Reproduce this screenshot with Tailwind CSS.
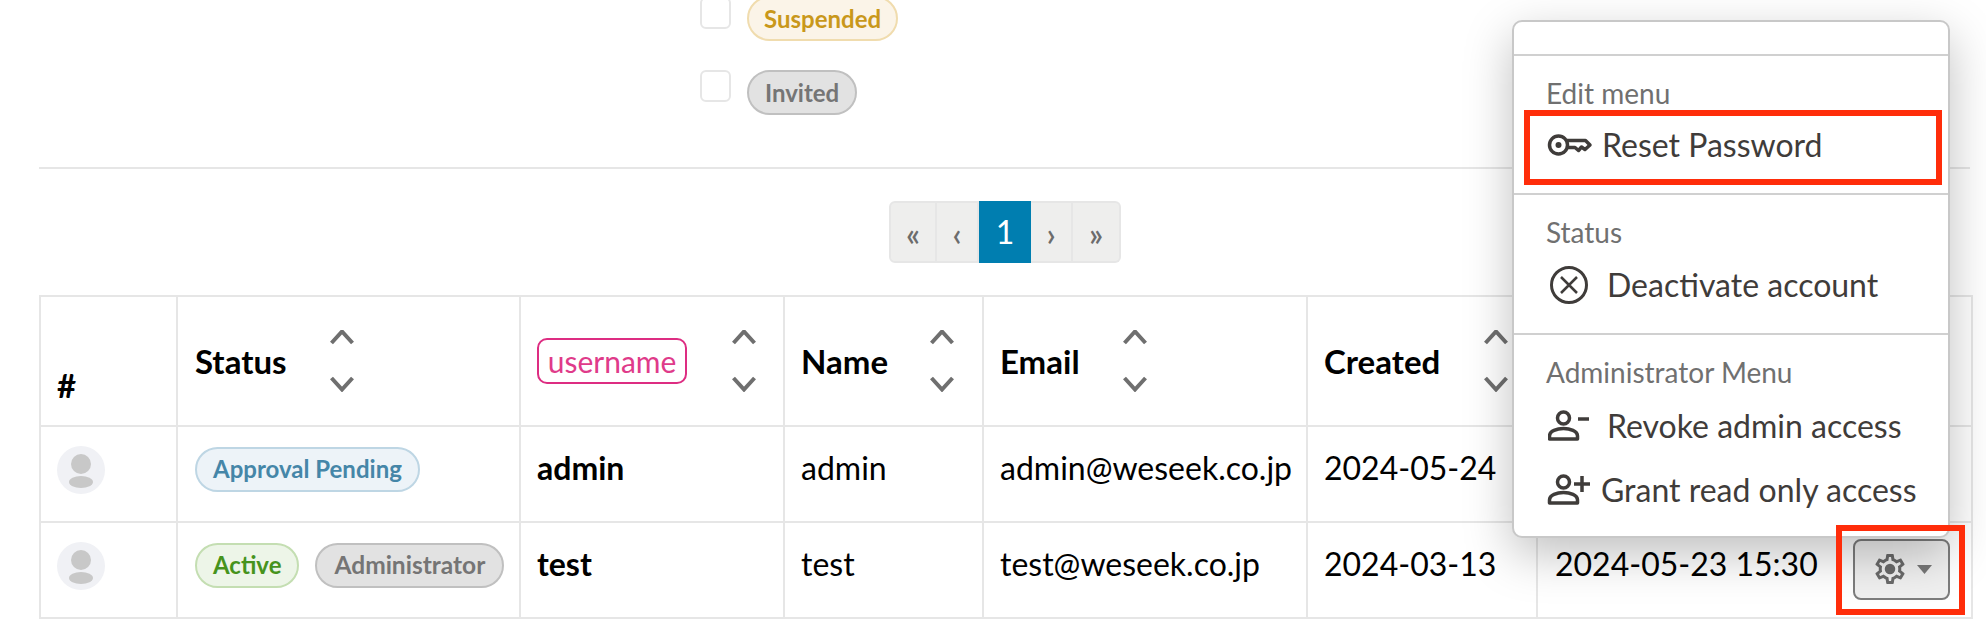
<!DOCTYPE html>
<html>
<head>
<meta charset="utf-8">
<script src="https://cdn.jsdelivr.net/npm/@tailwindcss/browser@4"></script>
</head>
<body class="bg-white overflow-hidden font-['Lato','Noto_Sans',sans-serif] text-[32px] text-black">
<div class="relative w-[1986px] h-[639px] overflow-hidden">
  <!-- filter rows -->
  <div class="pl-[700px] -mt-[4px] flex flex-col gap-[29px] h-[119px]">
    <div class="flex items-start gap-[16px]">
      <span class="block w-[31px] h-[32px] mt-[1px] rounded-[6px] border-2 border-[#e6e6e6] bg-white"></span>
      <span class="flex items-center h-[45px] px-[15px] rounded-full border-2 border-[#f0dcae] bg-[#fbf4e8] text-[#c9981b] text-[24px] font-bold">Suspended</span>
    </div>
    <div class="flex items-start gap-[16px]">
      <span class="block w-[31px] h-[32px] rounded-[6px] border-2 border-[#e6e6e6] bg-white"></span>
      <span class="flex items-center h-[45px] px-[16px] rounded-full border-2 border-[#c0c0c0] bg-[#e2e2e2] text-[#757575] text-[24px] font-bold">Invited</span>
    </div>
  </div>
  <!-- divider -->
  <div class="ml-[39px] w-[1931px] mt-[52px] h-[2px] bg-[#e6e6e6]"></div>
  <!-- pagination -->
  <div class="mt-[32px] ml-[889px] flex w-[232px] h-[62px] text-[#6c6c6c] text-[32px] leading-none font-semibold">
    <span class="w-[48px] pt-[3px] flex items-center justify-center bg-[#eeeeed] border-2 border-[#e6e6e6] rounded-l-[6px]">«</span>
    <span class="w-[42px] pt-[3px] flex items-center justify-center bg-[#eeeeed] border-y-2 border-r-2 border-[#e6e6e6]">‹</span>
    <span class="w-[52px] flex items-center justify-center bg-[#007eb0] text-white text-[32px] font-normal">1</span>
    <span class="w-[42px] pt-[3px] flex items-center justify-center bg-[#eeeeed] border-y-2 border-r-2 border-[#e6e6e6]">›</span>
    <span class="w-[48px] pt-[3px] flex items-center justify-center bg-[#eeeeed] border-y-2 border-r-2 border-[#e6e6e6] rounded-r-[6px]">»</span>
  </div>
  <!-- table -->
  <table class="mt-[32px] ml-[39px] w-[1932px] table-fixed border-collapse leading-[40px]">
    <colgroup>
      <col class="w-[137px]"><col class="w-[343px]"><col class="w-[264px]"><col class="w-[199px]"><col class="w-[324px]"><col class="w-[230px]"><col class="w-[435px]">
    </colgroup>
    <thead>
      <tr class="h-[130px] font-bold text-[33px]">
        <th class="border-2 border-[#e6e6e6] pl-[16px] pb-[20px] align-bottom text-left">#</th>
        <th class="border-2 border-[#e6e6e6] px-[17px] text-left"><div class="flex items-center"><span class="w-[135px]">Status</span>
          <svg width="24" height="62" viewBox="0 0 24 62" fill="none" stroke="#6f6f6f" stroke-width="4"><path d="M1.5 13 12 1.500 22.500 13M1.500 48 12 59.500 22.500 48"/></svg></div></th>
        <th class="border-2 border-[#e6e6e6] px-[16px] text-left font-normal"><div class="flex items-center"><span class="w-[195px]"><span class="inline-flex items-center h-[46px] w-[150px] justify-center rounded-[10px] border-2 border-[#dd2d82] text-[#df3b8a] text-[30px]">username</span></span>
          <svg width="24" height="62" viewBox="0 0 24 62" fill="none" stroke="#6f6f6f" stroke-width="4"><path d="M1.5 13 12 1.500 22.500 13M1.500 48 12 59.500 22.500 48"/></svg></div></th>
        <th class="border-2 border-[#e6e6e6] px-[16px] text-left"><div class="flex items-center"><span class="w-[129px]">Name</span>
          <svg width="24" height="62" viewBox="0 0 24 62" fill="none" stroke="#6f6f6f" stroke-width="4"><path d="M1.5 13 12 1.500 22.500 13M1.500 48 12 59.500 22.500 48"/></svg></div></th>
        <th class="border-2 border-[#e6e6e6] px-[16px] text-left"><div class="flex items-center"><span class="w-[123px]">Email</span>
          <svg width="24" height="62" viewBox="0 0 24 62" fill="none" stroke="#6f6f6f" stroke-width="4"><path d="M1.5 13 12 1.500 22.500 13M1.500 48 12 59.500 22.500 48"/></svg></div></th>
        <th class="border-2 border-[#e6e6e6] px-[16px] text-left"><div class="flex items-center"><span class="w-[160px]">Created</span>
          <svg width="24" height="62" viewBox="0 0 24 62" fill="none" stroke="#6f6f6f" stroke-width="4"><path d="M1.5 13 12 1.500 22.500 13M1.500 48 12 59.500 22.500 48"/></svg></div></th>
        <th class="border-2 border-[#e6e6e6] px-[17px] text-left"></th>
      </tr>
    </thead>
    <tbody>
      <tr class="h-[96px]">
        <td class="border-2 border-[#e6e6e6] px-[16px] pb-[8px]">
          <svg class="block" width="48" height="48" viewBox="0 0 48 48"><circle cx="24" cy="24" r="24" fill="#f0f1f5"/><circle cx="24" cy="18" r="10" fill="#c8c8c8"/><ellipse cx="24" cy="36" rx="12" ry="6" fill="#c8c8c8"/></svg>
        </td>
        <td class="border-2 border-[#e6e6e6] px-[17px] pb-[10px]"><span class="inline-flex items-center h-[45px] px-[16px] rounded-full border-2 border-[#bed6e4] bg-[#edf3f8] text-[#4586a8] text-[24px] font-bold">Approval Pending</span></td>
        <td class="border-2 border-[#e6e6e6] px-[16px] pb-[12px] font-bold">admin</td>
        <td class="border-2 border-[#e6e6e6] px-[16px] pb-[12px]">admin</td>
        <td class="border-2 border-[#e6e6e6] px-[16px] pb-[12px]">admin@weseek.co.jp</td>
        <td class="border-2 border-[#e6e6e6] px-[16px] pb-[12px]">2024-05-24</td>
        <td class="border-2 border-[#e6e6e6] px-[17px]"><div class="flex items-center justify-end pr-[4px]"><span class="block w-[97px] h-[61px] rounded-[8px] border-2 border-[#6f6f6f] bg-[#eeeeee]"></span></div></td>
      </tr>
      <tr class="h-[96px]">
        <td class="border-2 border-[#e6e6e6] px-[16px] pb-[8px]">
          <svg class="block" width="48" height="48" viewBox="0 0 48 48"><circle cx="24" cy="24" r="24" fill="#f0f1f5"/><circle cx="24" cy="18" r="10" fill="#c8c8c8"/><ellipse cx="24" cy="36" rx="12" ry="6" fill="#c8c8c8"/></svg>
        </td>
        <td class="border-2 border-[#e6e6e6] px-[17px] pb-[10px]"><div class="flex gap-[16px]"><span class="inline-flex items-center h-[45px] px-[16px] rounded-full border-2 border-[#c4deb2] bg-[#edf5e8] text-[#46931c] text-[24px] font-bold">Active</span><span class="inline-flex items-center h-[45px] px-[17px] rounded-full border-2 border-[#c0c0c0] bg-[#e2e2e2] text-[#757575] text-[24.500px] font-bold">Administrator</span></div></td>
        <td class="border-2 border-[#e6e6e6] px-[16px] pb-[12px] font-bold">test</td>
        <td class="border-2 border-[#e6e6e6] px-[16px] pb-[12px]">test</td>
        <td class="border-2 border-[#e6e6e6] px-[16px] pb-[12px]">test@weseek.co.jp</td>
        <td class="border-2 border-[#e6e6e6] px-[16px] pb-[12px]">2024-03-13</td>
        <td class="border-2 border-[#e6e6e6] pl-[17px] pr-[20px]"><div class="flex items-center justify-between">
          <span class="-mt-[12px]">2024-05-23 15:30</span>
          <span class="flex items-center justify-center gap-[9px] w-[97px] h-[61px] rounded-[8px] border-2 border-[#7d7d7d] bg-[#f0f0f0] mr-[1px] -mt-[2px]">
            <svg width="36" height="36" viewBox="0 0 24 24" fill="#6a6a6a"><path d="M19.43 12.98c.04-.32.07-.64.07-.98 0-.34-.03-.66-.07-.98l2.11-1.65c.19-.15.24-.42.12-.64l-2-3.46c-.09-.16-.26-.25-.44-.25-.06 0-.12.01-.17.03l-2.49 1c-.52-.4-1.08-.73-1.69-.98l-.38-2.65C14.46 2.18 14.25 2 14 2h-4c-.25 0-.46.18-.49.42l-.38 2.65c-.61.25-1.17.59-1.69.98l-2.49-1c-.06-.02-.12-.03-.18-.03-.17 0-.34.09-.43.25l-2 3.46c-.13.22-.07.49.12.64l2.11 1.65c-.04.32-.07.65-.07.98 0 .33.03.66.07.98l-2.11 1.65c-.19.15-.24.42-.12.64l2 3.46c.09.16.26.25.44.25.06 0 .12-.01.17-.03l2.49-1c.52.4 1.08.73 1.69.98l.38 2.65c.03.24.24.42.49.42h4c.25 0 .46-.18.49-.42l.38-2.65c.61-.25 1.17-.59 1.69-.98l2.49 1c.06.02.12.03.18.03.17 0 .34-.09.43-.25l2-3.46c.12-.22.07-.49-.12-.64l-2.11-1.65zm-1.98-1.71c.04.31.05.52.05.73 0 .21-.02.43-.05.73l-.14 1.13.89.7 1.08.84-.7 1.21-1.27-.51-1.04-.42-.9.68c-.43.32-.84.56-1.25.73l-1.06.43-.16 1.13-.2 1.35h-1.4l-.19-1.35-.16-1.13-1.06-.43c-.43-.18-.83-.41-1.23-.71l-.91-.7-1.06.43-1.27.51-.7-1.21 1.08-.84.89-.7-.14-1.13c-.03-.31-.05-.54-.05-.74s.02-.43.05-.73l.14-1.13-.89-.7-1.08-.84.7-1.21 1.27.51 1.04.42.9-.68c.43-.32.84-.56 1.25-.73l1.06-.43.16-1.13.2-1.35h1.39l.19 1.35.16 1.13 1.06.43c.43.18.83.41 1.23.71l.91.7 1.06-.43 1.27-.51.7 1.21-1.07.85-.89.7.14 1.13z"/><circle cx="12" cy="12" r="3.500"/></svg>
            <svg width="15" height="9" viewBox="0 0 15 9" fill="#777"><path d="M0 0h15L7.500 9z"/></svg>
          </span>
        </div></td>
      </tr>
    </tbody>
  </table>
  <!-- dropdown menu -->
  <div class="absolute left-[1512px] top-[20px] w-[438px] h-[518px] rounded-[10px] border-2 border-[#c8c8c8] bg-white shadow-[0_16px_48px_rgba(0,0,0,0.25)] flex flex-col text-[#3f3c3a]">
    <div class="h-[32px] border-b-2 border-[#d0d0d0] box-content"></div>
    <div class="h-[121px] border-b-2 border-[#d0d0d0] box-content pt-[16px]">
      <div class="h-[41px] pl-[32px] flex items-center text-[28px] text-[#707070]">Edit menu</div>
      <div class="h-[64px] pl-[34px] flex items-center">
        <svg class="w-[54px] shrink-0" width="54" height="24" viewBox="0 0 54 24" fill="none" stroke="#3f3c3a" stroke-width="3.500" style="overflow:visible"><circle cx="10.500" cy="12" r="9"/><circle cx="10.500" cy="12" r="3" fill="#3f3c3a" stroke="none"/><path stroke-linejoin="round" d="M19 7.500H37.500L42 12 37 16.500 33.500 14 30.500 17.500 27 14.500 23 14.500H19"/></svg>
        <span>Reset Password</span>
      </div>
    </div>
    <div class="h-[122px] border-b-2 border-[#d0d0d0] box-content pt-[16px]">
      <div class="h-[41px] pl-[32px] flex items-center text-[28px] text-[#707070]">Status</div>
      <div class="h-[64px] pl-[36px] pt-[2px] flex items-center">
        <svg class="w-[57px] shrink-0" width="57" height="38" viewBox="0 0 57 38" fill="none" stroke="#3f3c3a" stroke-width="3"><circle cx="19" cy="19" r="17.500"/><path stroke-width="2.500" d="M11 11 27 27M27 11 11 27"/></svg>
        <span>Deactivate account</span>
      </div>
    </div>
    <div class="pt-[16px]">
      <div class="h-[41px] pl-[32px] flex items-center text-[28px] text-[#707070]">Administrator Menu</div>
      <div class="h-[64px] pl-[34px] pt-[3px] flex items-center">
        <svg class="w-[59px] shrink-0" width="59" height="32" viewBox="0 0 59 32" fill="none" stroke="#3f3c3a" stroke-width="3.500"><circle cx="15.500" cy="8" r="6"/><path stroke-linejoin="round" d="M1.500 29V26C1.500 21 9 18.500 15.500 18.500S29.500 21 29.500 26V29Z"/><path d="M30 9H41"/></svg>
        <span>Revoke admin access</span>
      </div>
      <div class="h-[64px] pl-[34px] pt-[3px] flex items-center">
        <svg class="w-[53px] shrink-0" width="53" height="32" viewBox="0 0 53 32" fill="none" stroke="#3f3c3a" stroke-width="3.500" style="overflow:visible"><circle cx="15.500" cy="8" r="6"/><path stroke-linejoin="round" d="M1.500 29V26C1.500 21 9 18.500 15.500 18.500S29.500 21 29.500 26V29Z"/><path d="M26 10H42M34 2V18"/></svg>
        <span>Grant read only access</span>
      </div>
    </div>
  </div>
  <!-- annotations -->
  <div class="absolute left-[1524px] top-[110px] w-[418px] h-[75px] border-[6px] border-[#ff2d0a]"></div>
  <div class="absolute left-[1836px] top-[525px] w-[129px] h-[90px] border-[6px] border-[#ff2d0a]"></div>
</div>
</body>
</html>
